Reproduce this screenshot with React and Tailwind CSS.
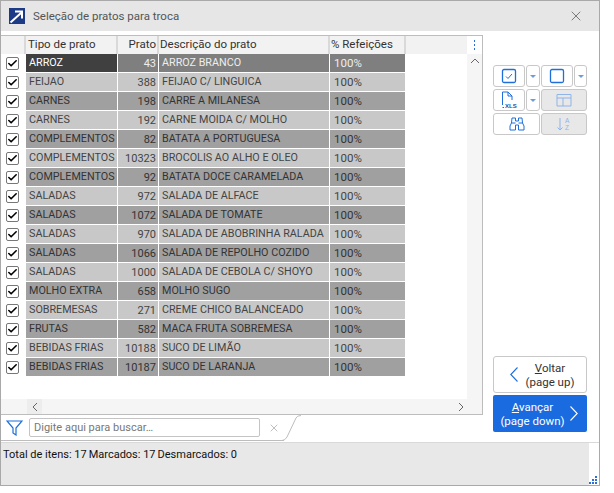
import React from "react";
import { X, Check } from "lucide-react";

const rows = [
  ["ARROZ", 43, "ARROZ BRANCO"],
  ["FEIJAO", 388, "FEIJAO C/ LINGUICA"],
  ["CARNES", 198, "CARRE A MILANESA"],
  ["CARNES", 192, "CARNE MOIDA C/ MOLHO"],
  ["COMPLEMENTOS", 82, "BATATA A PORTUGUESA"],
  ["COMPLEMENTOS", 10323, "BROCOLIS AO ALHO E OLEO"],
  ["COMPLEMENTOS", 92, "BATATA DOCE CARAMELADA"],
  ["SALADAS", 972, "SALADA DE ALFACE"],
  ["SALADAS", 1072, "SALADA DE TOMATE"],
  ["SALADAS", 970, "SALADA DE ABOBRINHA RALADA"],
  ["SALADAS", 1066, "SALADA DE REPOLHO COZIDO"],
  ["SALADAS", 1000, "SALADA DE CEBOLA C/ SHOYO"],
  ["MOLHO EXTRA", 658, "MOLHO SUGO"],
  ["SOBREMESAS", 271, "CREME CHICO BALANCEADO"],
  ["FRUTAS", 582, "MACA FRUTA SOBREMESA"],
  ["BEBIDAS FRIAS", 10188, "SUCO DE LIMÃO"],
  ["BEBIDAS FRIAS", 10187, "SUCO DE LARANJA"],
];

const gridCols = "grid grid-cols-[25px_92px_41px_171px_76px]";

function ToolBtn({ w = "w-[32px]", disabled, children }) {
  return (
    <div className={`h-[22px] rounded-[3px] border border-[#c8c8c8] flex items-center justify-center ${w} ${disabled ? "bg-[#e8e8e8]" : "bg-white"}`}>
      {children}
    </div>
  );
}

function Caret() {
  return <div className="w-0 h-0 border-x-[3px] border-x-transparent border-t-[3px] border-t-[#6f9bd8]" />;
}

function Chevron({ dir, color }) {
  return (
    <svg width="8" height="15" viewBox="0 0 8 15" className="shrink-0">
      <path d={dir === "left" ? "M7.5 0.5 L0.8 7.5 L7.5 14.5" : "M0.5 0.5 L7.2 7.5 L0.5 14.5"} fill="none" stroke={color} strokeWidth="1.1" />
    </svg>
  );
}

function SmallChevron({ d }) {
  return (
    <svg width="10" height="10" viewBox="0 0 10 10" className="shrink-0">
      <path d={d} fill="none" stroke="#666" strokeWidth="1" />
    </svg>
  );
}

export default function App() {
  return (
    <div className="w-[614px] h-[493px] bg-white text-[11px] leading-none text-[#222]" style={{ fontFamily: "Roboto, sans-serif" }}>
      <div className="w-[600px] h-[486px] border border-[#a9a9a9] flex flex-col relative">
        <div className="h-[30px] bg-[#e6e6e6] flex items-center pl-[8px] pr-[15px] shrink-0">
          <svg width="16" height="16" viewBox="0 0 16 16" className="mr-[8px]">
            <rect width="16" height="16" fill="#1c3a86" />
            <path d="M1.5 14.5 L12 5 M6 3.5 H13 V10.5" stroke="#fff" strokeWidth="2" fill="none" />
          </svg>
          <span className="text-[11.5px] text-[#555] pt-[1px]">Seleção de pratos para troca</span>
          <X className="ml-auto text-[#444]" size={16} strokeWidth={1} />
        </div>

        <div className="flex flex-1 min-h-0 mt-[4px]">
          <div className="w-[482px] shrink-0 flex flex-col">
            <div className="h-[364px] border-t border-r border-[#bdbdbd] flex">
              <div className="flex-1 min-w-0">
                <div className="h-[18px] bg-[#f2f2f2]">
                  <div className={`${gridCols} h-[18px]`}>
                    {["", "Tipo de prato", "Prato", "Descrição do prato", "% Refeições"].map((h, i) => (
                      <div key={i} className={`border-r-2 border-[#d9d9d9] flex items-center text-[#333] text-[11.5px] whitespace-nowrap ${i === 2 ? "justify-end pr-[1px]" : i === 1 ? "pl-[2px]" : "pl-[1px]"}`}>{h}</div>
                    ))}
                  </div>
                </div>
                {rows.map((r, i) => {
                  const bg = i === 0 ? "bg-[#7f7f7f] text-[#eee]" : i % 2 ? "bg-[#c8c8c8] text-[#444]" : "bg-[#a0a0a0] text-[#333]";
                  return (
                    <div key={i} className={`${gridCols} h-[19px] text-[10.75px] whitespace-nowrap`}>
                      <div className="bg-white flex items-center pl-[5px]">
                        <div className="w-[13px] h-[13px] border border-[#777] rounded-[2px] bg-white flex items-center justify-center">
                          <Check size={11} strokeWidth={3.5} className="text-black" />
                        </div>
                      </div>
                      <div className={`flex items-center pl-[3px] pt-[1px] border-r border-b border-white ${i === 0 ? "bg-[#404040] text-white" : bg}`}>{r[0]}</div>
                      <div className={`flex items-center justify-end pr-[2px] pt-[1px] text-[11px] border-r border-b border-white ${bg}`}>{r[1]}</div>
                      <div className={`flex items-center pl-[3px] pt-[1px] border-r border-b border-white ${bg}`}>{r[2]}</div>
                      <div className={`flex items-center pl-[4px] pt-[1px] text-[11.5px] border-r border-b border-white ${bg}`}>100%</div>
                    </div>
                  );
                })}
              </div>
              <div className="w-[15px] shrink-0 bg-[#f5f5f5] flex flex-col items-center">
                <div className="h-[18px] w-full bg-white flex flex-col items-center justify-center gap-[2px]">
                  <i className="w-[1px] h-[2px] bg-[#2c6fd6]" />
                  <i className="w-[1px] h-[2px] bg-[#2c6fd6]" />
                  <i className="w-[1px] h-[2px] bg-[#2c6fd6]" />
                </div>
                <div className="mt-[2px]"><SmallChevron d="M1 7 L5 3 L9 7" /></div>
              </div>
            </div>
            <div className="h-[15px] bg-[#f5f5f5] border-r border-[#bdbdbd] flex items-center justify-between pl-[26px] pr-[16px] shrink-0">
              <div className="w-[15px] h-full bg-[#ededed] flex items-center justify-center"><SmallChevron d="M7 1 L3 5 L7 9" /></div>
              <SmallChevron d="M3 1 L7 5 L3 9" />
            </div>
            <div className="h-[27px] border-t border-[#bdbdbd] shrink-0 relative">
              <div className="w-[283px] h-full border-b border-[#bdbdbd] flex items-center pl-[5px]">
                <svg width="17" height="16" viewBox="0 0 17 16" className="mr-[6px] shrink-0">
                  <path d="M1 1 H16 L10 8 V15 L7 13 V8 Z" fill="none" stroke="#1e6fd9" strokeWidth="1.2" />
                </svg>
                <div className="w-[231px] h-[19px] border border-[#c4c4c4] rounded-[2px] flex items-center pl-[4px] text-[11px] text-[#777]">Digite aqui para buscar…</div>
                <X size={12} strokeWidth={1.1} className="text-[#888] ml-[8px]" />
              </div>
              <svg width="20" height="27" viewBox="0 0 20 27" className="absolute left-[281px] top-0">
                <path d="M0 25.5 Q3 25.5 5 22 L14 3 Q15 0.5 19 0.5" fill="none" stroke="#bdbdbd" strokeWidth="1" />
              </svg>
            </div>
          </div>

          <div className="flex-1 flex flex-col items-start pl-[10px] pt-[30px] pb-[9px]">
            <div className="flex flex-col gap-[2px]">
              <div className="flex gap-[1px]">
                <ToolBtn>
                  <svg width="16" height="16" viewBox="0 0 16 16">
                    <rect x="1.5" y="1.5" width="13" height="13" rx="1.5" fill="none" stroke="#1e6fd9" strokeWidth="1.3" />
                    <path d="M5 8.5 L7 10.5 L11 6" fill="none" stroke="#1e6fd9" strokeWidth="1" />
                  </svg>
                </ToolBtn>
                <ToolBtn w="w-[14px]"><Caret /></ToolBtn>
                <ToolBtn>
                  <svg width="16" height="16" viewBox="0 0 16 16">
                    <rect x="1.5" y="1.5" width="13" height="13" rx="1.5" fill="none" stroke="#1e6fd9" strokeWidth="1.3" />
                  </svg>
                </ToolBtn>
                <ToolBtn w="w-[13px]"><Caret /></ToolBtn>
              </div>
              <div className="flex gap-[1px]">
                <ToolBtn>
                  <svg width="18" height="18" viewBox="0 0 18 18">
                    <path d="M2.5 14 V1 H8 L12 5 V9 M8 1 V5 H12 M2.5 16.5 H4" fill="none" stroke="#1e6fd9" strokeWidth="1" />
                    <text x="5" y="17" fontSize="6" fontWeight="700" fill="#1f4e9c" fontFamily="Liberation Sans">XLS</text>
                  </svg>
                </ToolBtn>
                <ToolBtn w="w-[14px]"><Caret /></ToolBtn>
                <ToolBtn w="w-[46px]" disabled>
                  <svg width="16" height="14" viewBox="0 0 16 14">
                    <path d="M1 1.5 H15 V13 H1 Z M1 5 H15 M7 5 V13" fill="none" stroke="#8fb4ea" strokeWidth="1" />
                  </svg>
                </ToolBtn>
              </div>
              <div className="flex gap-[1px]">
                <ToolBtn w="w-[47px]">
                  <svg width="16" height="14" viewBox="0 0 16 14">
                    <path d="M3 1 H6.5 V4 H9.5 V1 H13 L13.5 6 L15 9 V13 H9.5 V8 H6.5 V13 H1 V9 L2.5 6 Z M2.5 6 H6.5 M9.5 6 H13.5" fill="none" stroke="#1e6fd9" strokeWidth="1" />
                  </svg>
                </ToolBtn>
                <ToolBtn w="w-[46px]" disabled>
                  <svg width="16" height="14" viewBox="0 0 16 14">
                    <path d="M4 1 V13 M1.5 10.5 L4 13 L6.5 10.5" fill="none" stroke="#8fb4ea" strokeWidth="1" />
                    <text x="9" y="6" fontSize="6.5" fill="#8fb4ea" fontFamily="Liberation Sans">A</text>
                    <text x="9" y="13" fontSize="6.5" fill="#8fb4ea" fontFamily="Liberation Sans">Z</text>
                  </svg>
                </ToolBtn>
              </div>
            </div>

            <div className="mt-auto flex flex-col gap-[2px]">
              <div className="w-[94px] h-[37px] rounded-[3px] border border-[#c8c8c8] bg-white flex items-center text-[#333] text-[11.5px]">
                <div className="ml-[16px]"><Chevron dir="left" color="#1e6fd9" /></div>
                <div className="flex-1 text-center leading-[14px] pr-[4px]"><u>V</u>oltar<br />(page up)</div>
              </div>
              <div className="w-[94px] h-[37px] rounded-[2px] bg-[#1a6ae0] flex items-center text-white text-[11.5px]">
                <div className="flex-1 text-center leading-[14px] pl-[6px]"><u>A</u>vançar<br />(page down)</div>
                <div className="mr-[9px] ml-[4px]"><Chevron dir="right" color="#fff" /></div>
              </div>
            </div>
          </div>
        </div>

        <div className="h-[43px] mt-[1px] border-t border-[#d9d9d9] shrink-0 flex">
          <div className="flex-1 mr-[10px] bg-[#e8e8e8] pl-[2px] pt-[6px] text-[11px] text-[#111] flex gap-[2px] items-start">
            <span>Total de itens: 17</span><span>Marcados: 17</span><span>Desmarcados: 0</span>
          </div>
        </div>
        <div className="absolute right-[2px] bottom-[1px] grid grid-cols-3 gap-[1px]">
          <i /><i /><i className="w-[2px] h-[2px] bg-[#2c6fd6]" />
          <i /><i className="w-[2px] h-[2px] bg-[#2c6fd6]" /><i className="w-[2px] h-[2px] bg-[#2c6fd6]" />
          <i className="w-[2px] h-[2px] bg-[#2c6fd6]" /><i className="w-[2px] h-[2px] bg-[#2c6fd6]" /><i className="w-[2px] h-[2px] bg-[#2c6fd6]" />
        </div>
      </div>
    </div>
  );
}
